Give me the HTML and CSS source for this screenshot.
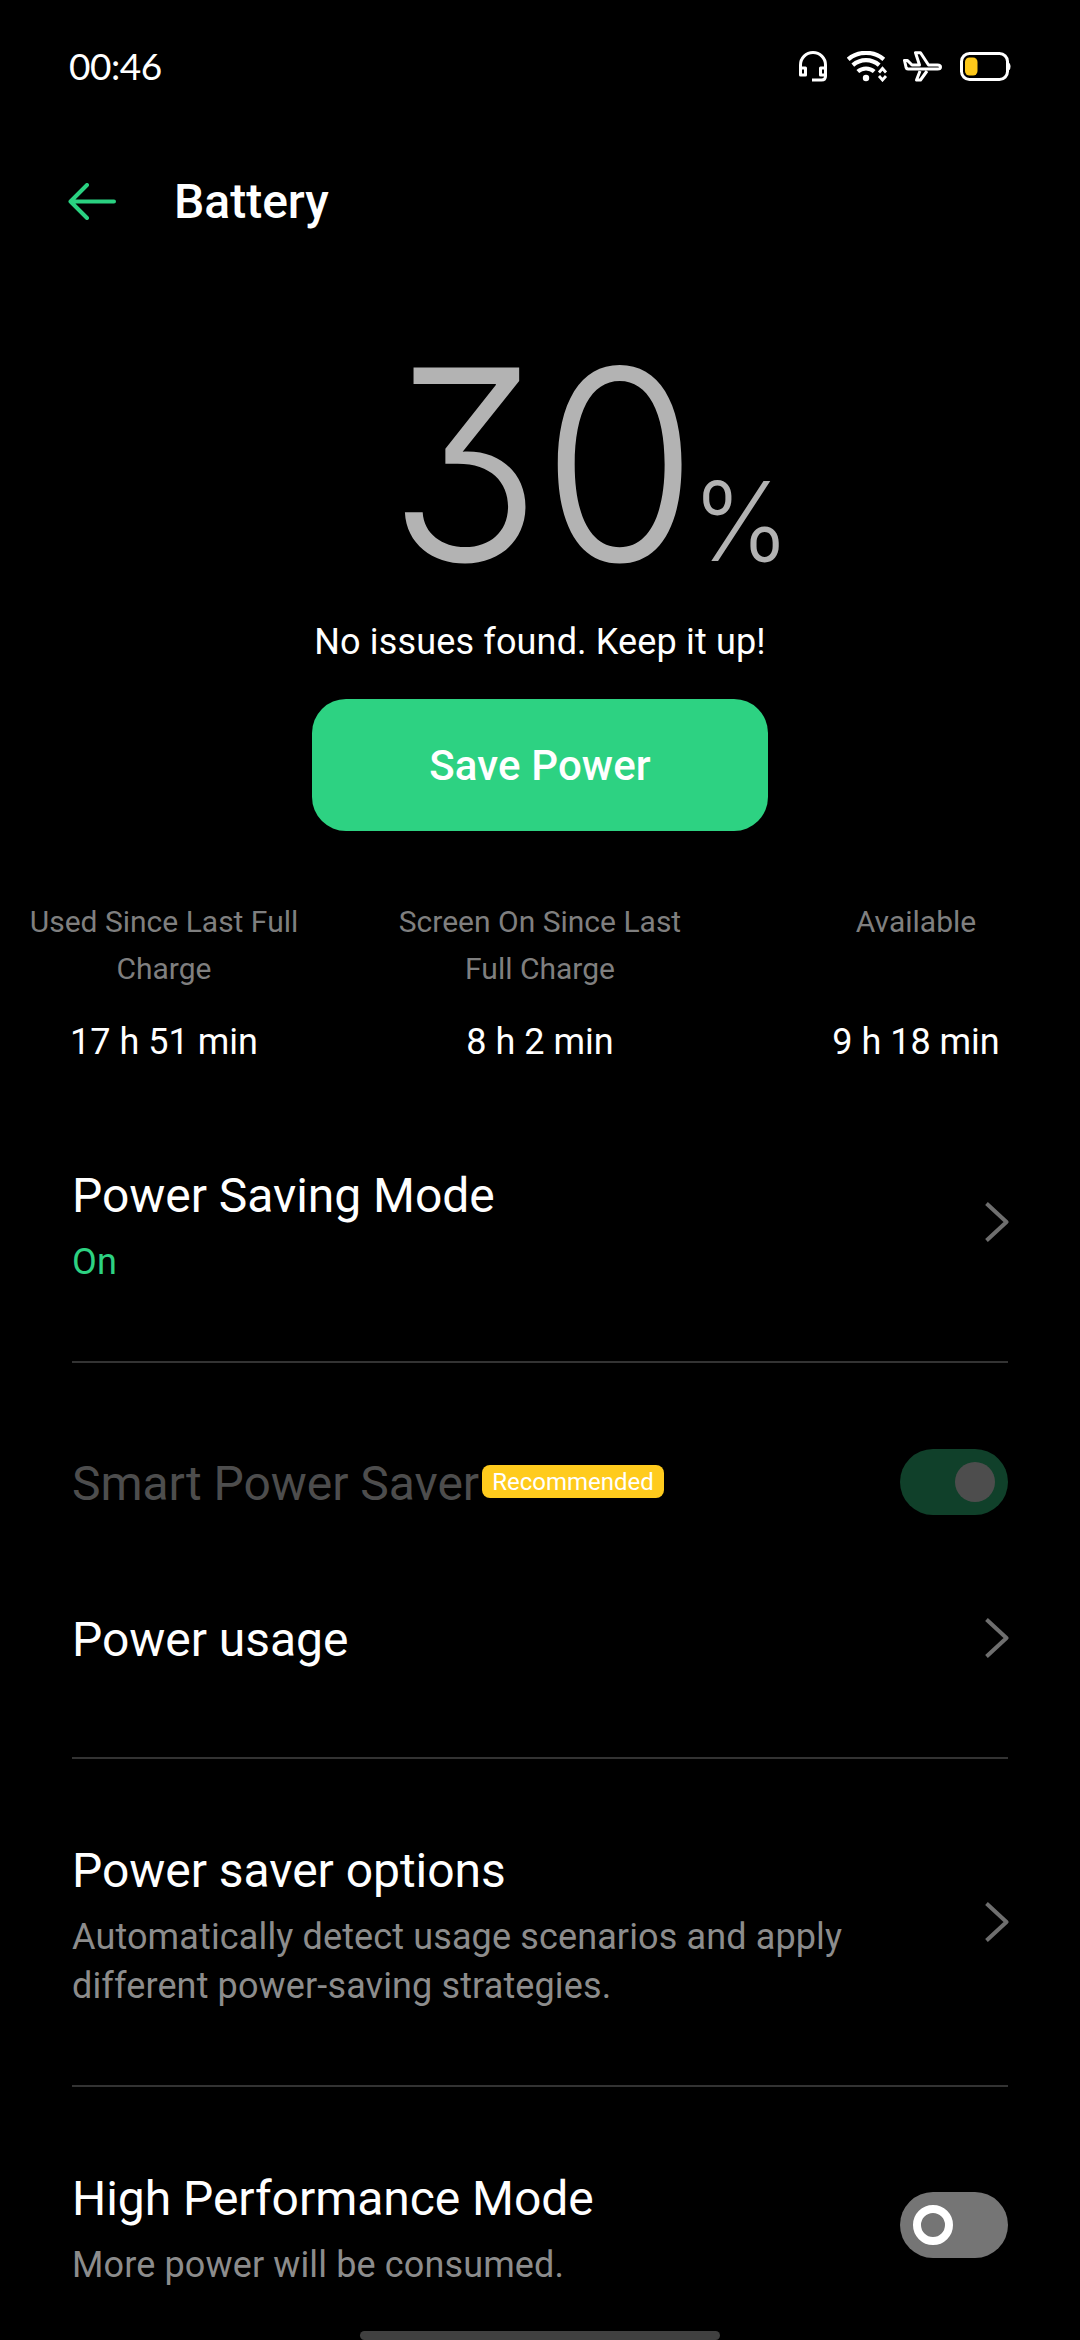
FILE: index.html
```html
<!DOCTYPE html>
<html lang="en">
  <head>
    <meta charset="UTF-8" />
    <meta name="viewport" content="width=device-width, initial-scale=1.0" />
    <title>Battery</title>
    <link rel="stylesheet" href="styles.css">
  </head>
  <body>
    <div class="status-bar">
      <div class="clock">00:46</div>
      <div class="status-icons">
        <svg class="icon-headset" width="28" height="31" viewBox="0 0 28 31" fill="none" stroke="#fff" stroke-width="3">
          <path d="M1.5 24V14a12.5 12.5 0 0 1 25 0v11q0 4-4 4H13" />
          <path d="M1.5 17h5v7h-5zM26.5 17h-5v7h5z" stroke-linejoin="round" />
        </svg>
        <svg class="icon-wifi" width="41" height="31" viewBox="0 0 41 31" fill="none" stroke="#fff">
          <path d="M1.2 8.3C11 -.3 27 -.3 36.8 8.3" stroke-width="4.2" />
          <path d="M5.8 14.2C13.5 7.5 24.5 7.5 32.2 14.2" stroke-width="4.2" />
          <path d="M10.8 20.5C15.5 16.5 22.5 16.5 27.2 20.5" stroke-width="4.2" />
          <circle cx="19" cy="27" r="3.2" fill="#fff" stroke="none" />
          <path d="M32 21.5l3.5-4 3.5 4M32 25l3.5 4 3.5-4" stroke-width="2.8" />
        </svg>
        <svg class="icon-plane" width="39" height="31" viewBox="0 0 39 31" fill="none" stroke="#fff" stroke-width="3" stroke-linejoin="round">
          <path d="M1.5 9.5h3l4.5 4.5h7.5L12.5 1.8H17.5L25.5 14H34.5q3 0 3 2t-3 2H5q-1.5 0-1.9-1.5z" />
          <path d="M17 20L13.5 29H17.5L24 20" />
        </svg>
        <svg class="icon-battery" width="51" height="29" viewBox="0 0 51 29">
          <rect x="1.5" y="1.5" width="46" height="26" rx="8" fill="none" stroke="#fff" stroke-width="3" />
          <rect x="5" y="5.5" width="12.5" height="18" rx="4.5" fill="#fdc81a" />
          <path d="M48 10q2.5 1 2.5 4.5t-2.5 4.5z" fill="#fff" />
        </svg>
      </div>
    </div>

    <div class="header">
      <svg class="back" width="48" height="37" viewBox="0 0 48 37" fill="none" stroke="#2ad181" stroke-width="4" stroke-linecap="round" stroke-linejoin="round">
        <path d="M46 18.5H2.5M19 2L2.5 18.5L19 35" />
      </svg>
      <h1>Battery</h1>
    </div>

    <div class="summary">
      <div class="level"><span class="level-value">30</span><span class="level-unit">%</span></div>
      <div class="message">No issues found. Keep it up!</div>
      <button class="save-button">Save Power</button>
    </div>

    <div class="stats">
      <div class="stat">
        <div class="stat-label">Used Since Last Full Charge</div>
        <div class="stat-value">17 h 51 min</div>
      </div>
      <div class="stat">
        <div class="stat-label">Screen On Since Last Full Charge</div>
        <div class="stat-value">8 h 2 min</div>
      </div>
      <div class="stat">
        <div class="stat-label">Available</div>
        <div class="stat-value">9 h 18 min</div>
      </div>
    </div>

    <div class="settings">
      <div class="row row-mode">
        <div class="row-text">
          <div class="title">Power Saving Mode</div>
          <div class="sub on">On</div>
        </div>
        <svg class="chevron" width="24" height="40" viewBox="0 0 24 40"><path d="M1.5 1.5L21.5 20L1.5 38.5" /></svg>
      </div>
      <div class="row row-smart">
        <div class="title disabled">Smart Power Saver</div>
        <span class="badge">Recommended</span>
        <div class="toggle toggle-on"><div class="knob"></div></div>
      </div>
      <div class="row row-usage">
        <div class="title">Power usage</div>
        <svg class="chevron" width="24" height="40" viewBox="0 0 24 40"><path d="M1.5 1.5L21.5 20L1.5 38.5" /></svg>
      </div>
      <div class="row row-options">
        <div class="row-text">
          <div class="title">Power saver options</div>
          <div class="sub">Automatically detect usage scenarios and apply different power-saving strategies.</div>
        </div>
        <svg class="chevron" width="24" height="40" viewBox="0 0 24 40"><path d="M1.5 1.5L21.5 20L1.5 38.5" /></svg>
      </div>
      <div class="row row-performance">
        <div class="row-text">
          <div class="title">High Performance Mode</div>
          <div class="sub">More power will be consumed.</div>
        </div>
        <div class="toggle"><div class="knob"></div></div>
      </div>
    </div>

    <div class="home-bar"></div>
  </body>
</html>
```
FILE: styles.css
```css
* {
  box-sizing: border-box;
}
body {
  margin: 0;
  height: 2340px;
  overflow: hidden;
  display: flex;
  flex-direction: column;
  background-color: #000;
  color: #fff;
  font-family: Roboto, sans-serif;
}
svg {
  display: block;
  flex-shrink: 0;
}

/* status bar */
.status-bar {
  height: 132px;
  padding: 0 69px;
  display: flex;
  justify-content: space-between;
  align-items: center;
}
.clock {
  font-family: Lato, sans-serif;
  font-size: 37px;
  line-height: 44px;
  letter-spacing: -0.5px;
}
.status-icons {
  display: flex;
  align-items: center;
}
.icon-wifi {
  margin-left: 20px;
}
.icon-plane {
  margin-left: 15px;
}
.icon-battery {
  margin-left: 18px;
}

/* title */
.header {
  height: 138px;
  padding-left: 68px;
  display: flex;
  align-items: center;
}
.header h1 {
  margin: 0 0 0 58px;
  font-size: 48px;
  font-weight: 500;
}

/* level and button */
.summary {
  height: 562px;
  display: flex;
  flex-direction: column;
  align-items: center;
}
.level {
  height: 296px;
  padding-top: 59px;
  margin-left: 119px;
  display: flex;
  align-items: baseline;
  font-family: Inter, sans-serif;
  font-weight: 300;
  color: #b3b3b3;
  transform: scaleX(0.95);
  transform-origin: left;
}
.level-value {
  font-size: 266px;
  line-height: 270px;
  font-feature-settings: "cv09";
}
.level-unit {
  margin: 0 0 2px -6px;
  font-size: 110px;
  line-height: 112px;
}
.message {
  margin-top: 52px;
  font-size: 36px;
  line-height: 49px;
  letter-spacing: 0.15px;
}
.save-button {
  width: 456px;
  height: 132px;
  margin-top: 32px;
  border: 0;
  border-radius: 34px;
  background-color: #2dd282;
  color: #fff;
  font-family: Roboto, sans-serif;
  font-size: 42px;
  font-weight: 500;
  letter-spacing: 0.15px;
}

/* usage times */
.stats {
  height: 336px;
  padding: 66px 0 0;
  display: flex;
  justify-content: space-between;
}
.stat {
  width: 328px;
  text-align: center;
}
.stat-label {
  height: 94px;
  padding: 0 20px;
  font-size: 30px;
  line-height: 47px;
  color: #7f7f7f;
}
.stat-value {
  margin-top: 29px;
  font-size: 36px;
  line-height: 42px;
}

/* settings list */
.settings {
  padding: 0 72px;
}
.row {
  display: flex;
  align-items: flex-start;
}
.row-mode,
.row-usage,
.row-options {
  border-bottom: 2px solid #333;
}
.row-mode {
  height: 195px;
}
.row-smart {
  height: 162px;
  padding-top: 86px;
}
.row-usage {
  height: 234px;
  padding-top: 87px;
}
.row-options {
  height: 328px;
  padding-top: 84px;
}
.row-performance {
  padding-top: 84px;
}
.title {
  font-size: 48px;
  line-height: 56px;
  letter-spacing: -0.04px;
  white-space: nowrap;
}
.title.disabled {
  margin-top: 7px;
  color: #4d4d4d;
}
.sub {
  width: 800px;
  margin-top: 14px;
  font-size: 36px;
  line-height: 49px;
  letter-spacing: 0.13px;
  color: #8c8c8c;
}
.sub.on {
  color: #2dd282;
}
.chevron {
  margin: 34px -1px 0 auto;
  fill: none;
  stroke: #6e6e6e;
  stroke-width: 4;
  stroke-linejoin: round;
}
.row-usage .chevron {
  margin-top: 6px;
}
.row-options .chevron {
  margin-top: 59px;
}
.badge {
  width: 182px;
  height: 33px;
  margin: 16px 0 0 3px;
  border-radius: 8px;
  background-color: #ffcb1d;
  font-size: 24px;
  line-height: 35px;
  text-align: center;
}
.toggle {
  width: 108px;
  height: 66px;
  margin: 21px 0 0 auto;
  padding: 13px;
  display: flex;
  border-radius: 33px;
  background-color: #757575;
}
.toggle .knob {
  width: 40px;
  height: 40px;
  border: 8px solid #fff;
  border-radius: 50%;
}
.toggle-on {
  margin-top: 0;
  justify-content: flex-end;
  background-color: #10402a;
}
.toggle-on .knob {
  border: 0;
  background-color: #4d4d4d;
}

.home-bar {
  width: 360px;
  height: 9px;
  margin: auto auto 0;
  border-radius: 5px;
  background-color: #404040;
}
```
